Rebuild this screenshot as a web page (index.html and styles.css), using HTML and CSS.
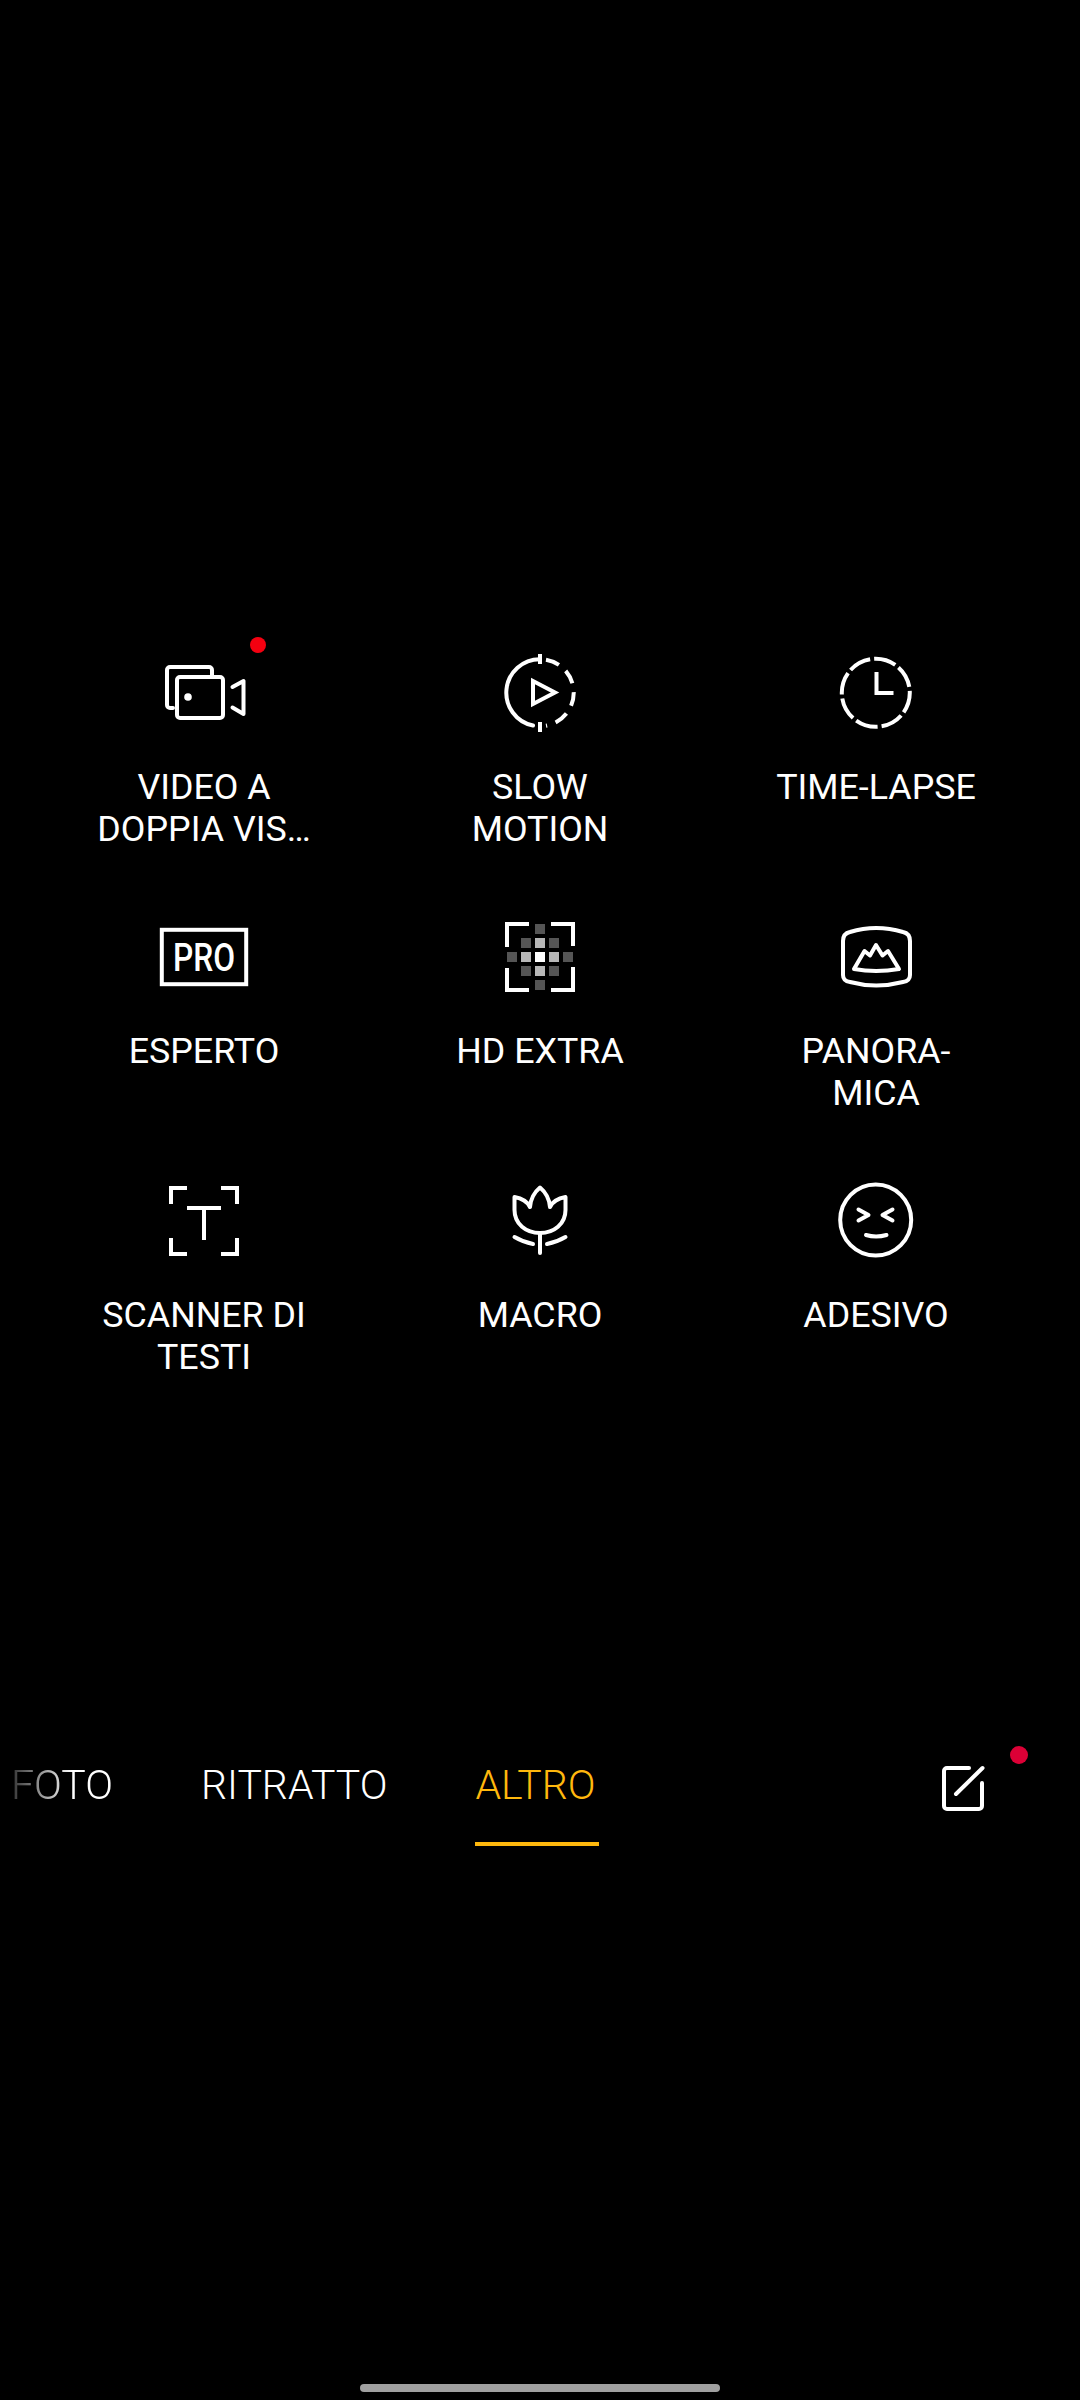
FILE: index.html
```html
<!DOCTYPE html>
<html lang="it">
<head>
<meta charset="utf-8">
<title>Fotocamera</title>
<link rel="stylesheet" href="styles.css">
</head>
<body>
<main class="screen">
  <div class="preview"></div>
  <section class="modes">
    <div class="mode">
      <span class="dot dot-bright"></span>
      <svg class="icon" viewBox="156 644 96 96"><path class="s" d="M173 708H170a3 3 0 0 1-3-3V670a3 3 0 0 1 3-3H209a3 3 0 0 1 3 3V675"/><rect class="s" x="177" y="677" width="46" height="41" rx="3"/><path class="s" d="M232.500 687L243.500 681V714L232.500 707.500"/><circle class="f" cx="188" cy="697" r="3.800"/></svg>
      <p class="label">VIDEO A<br>DOPPIA VIS…</p>
    </div>
    <div class="mode">
      <svg class="icon" viewBox="492 644 96 96"><path class="s" d="M540 659.200A33.500 33.500 0 0 0 533 725.500"/><path class="s sq" d="M540 654V664M540 722V732" stroke-width="5"/><path class="s dash-slow" d="M546 659.700A33.500 33.500 0 0 1 546 725.700"/><path class="s sq" d="M533 681V704L555 692.500Z"/></svg>
      <p class="label">SLOW<br>MOTION</p>
    </div>
    <div class="mode">
      <svg class="icon" viewBox="828 644 96 96"><circle class="s dash-time" cx="875.800" cy="692.800" r="34"/><path class="s sq" d="M876.500 672V693H893.500"/></svg>
      <p class="label">TIME-LAPSE</p>
    </div>
    <div class="mode">
      <svg class="icon" viewBox="156 908 96 96"><rect class="s sq" x="161.800" y="929.800" width="84.400" height="54.400"/><text class="pro" x="173" y="971" textLength="62" lengthAdjust="spacingAndGlyphs">PRO</text></svg>
      <p class="label">ESPERTO</p>
    </div>
    <div class="mode">
      <svg class="icon" viewBox="492 908 96 96">
        <path class="s sq" d="M507 947V924H529M551 924H573V946M573 967V990H551M529 990H507V968"/>
        <rect class="g1" x="535" y="924" width="10" height="10"/>
        <rect class="g1" x="521" y="938" width="10" height="10"/><rect class="g2" x="535" y="938" width="10" height="10"/><rect class="g1" x="549" y="938" width="10" height="10"/>
        <rect class="g1" x="507" y="952" width="10" height="10"/><rect class="g2" x="521" y="952" width="10" height="10"/><rect class="f" x="535" y="952" width="10" height="10"/><rect class="g2" x="549" y="952" width="10" height="10"/><rect class="g1" x="563" y="952" width="10" height="10"/>
        <rect class="g1" x="521" y="966" width="10" height="10"/><rect class="g2" x="535" y="966" width="10" height="10"/><rect class="g1" x="549" y="966" width="10" height="10"/>
        <rect class="g1" x="535" y="980" width="10" height="10"/>
      </svg>
      <p class="label">HD EXTRA</p>
    </div>
    <div class="mode">
      <svg class="icon" viewBox="828 908 96 96"><path class="s" d="M843 941Q843 933.500 850 932Q876 924 903 932Q910 933.500 910 941V975Q910 981 903 982Q876 989 850 982Q843 981 843 975Z"/><path class="s" d="M854 969L864.500 951L870 955.500L876 945L882.500 955.500L888 951L899 969Q876 973 854 969Z"/></svg>
      <p class="label">PANORA-<br>MICA</p>
    </div>
    <div class="mode">
      <svg class="icon" viewBox="156 1172 96 96"><path class="s sq" d="M171 1204V1188H187M221 1188H237V1204M237 1238V1254H221M187 1254H171V1238"/><path class="s sq" d="M187 1208H221M204 1208V1240"/></svg>
      <p class="label">SCANNER DI<br>TESTI</p>
    </div>
    <div class="mode">
      <svg class="icon" viewBox="492 1172 96 96"><path class="s" d="M514.500 1197Q526 1199 530 1207Q531 1195 540 1187.500Q549 1195 550 1207Q554 1199 565.500 1197V1210C565.500 1224 554 1233 540 1233C526 1233 514.500 1224 514.500 1210Z"/><path class="s" d="M540 1233V1253"/><path class="s" d="M514.500 1237Q523 1242 533 1244M565.500 1237Q557 1242 547 1244"/></svg>
      <p class="label">MACRO</p>
    </div>
    <div class="mode">
      <svg class="icon" viewBox="828 1172 96 96"><circle class="s" cx="875.700" cy="1220" r="35.500"/><path class="s" d="M858.500 1209.500L868.500 1215L858.500 1220.500M892.500 1209.500L882.500 1215L892.500 1220.500M866 1235Q876 1238 886.500 1235"/></svg>
      <p class="label">ADESIVO</p>
    </div>
  </section>
  <nav class="tabbar">
    <span class="tab tab-fade">FOTO</span>
    <span class="tab">RITRATTO</span>
    <span class="tab tab-active">ALTRO</span>
    <span class="edit">
      <svg class="edit-icon" viewBox="936 1760 56 56"><path class="s" d="M969 1767H947a3 3 0 0 0-3 3V1805a3 3 0 0 0 3 3H979a3 3 0 0 0 3-3V1782"/><path class="s" d="M956 1793L982.500 1767"/></svg>
      <span class="dot dot-crimson"></span>
    </span>
  </nav>
  <div class="home-bar"></div>
</main>
</body>
</html>
```

FILE: styles.css
```css
* { box-sizing: border-box; }
html, body { margin: 0; background: #000; }
.screen {
  width: 1080px;
  height: 2400px;
  background: #000;
  color: #fff;
  font-family: Roboto, "Liberation Sans", sans-serif;
  display: flex;
  flex-direction: column;
  overflow: hidden;
}
.preview { height: 644px; flex: none; }
.modes {
  display: grid;
  grid-template-columns: repeat(3, 336px);
  grid-auto-rows: 264px;
  padding-left: 36px;
  flex: none;
}
.mode {
  position: relative;
  display: flex;
  flex-direction: column;
  align-items: center;
}
.icon { width: 96px; height: 96px; display: block; flex: none; }
.label {
  margin: 26px 0 0;
  font-size: 35.800px;
  line-height: 42px;
  text-align: center;
  white-space: nowrap;
}
.s { fill: none; stroke: #fff; stroke-width: 4; stroke-linecap: round; stroke-linejoin: round; }
.sq { stroke-linecap: butt; stroke-linejoin: miter; }
.f { fill: #fff; }
.g1 { fill: #555; }
.g2 { fill: #b8b8b8; }
.dash-slow { stroke-linecap: butt; stroke-dasharray: 14 9; }
.dash-time { stroke-linecap: butt; stroke-dasharray: 22.700 4; stroke-dashoffset: 2; transform-box: fill-box; transform-origin: center; transform: rotate(-90deg); }
.pro { fill: #fff; font-family: Roboto, sans-serif; font-size: 38px; font-weight: 500; }
.dot { position: absolute; border-radius: 50%; }
.dot-bright { width: 16px; height: 16px; background: #f40010; left: 214px; top: -7px; }
.dot-crimson { width: 18px; height: 18px; background: #dc0036; left: 74px; top: -15px; }
.tabbar {
  margin-top: 325px;
  display: flex;
  align-items: flex-start;
  padding-left: 11px;
  gap: 88px;
  flex: none;
}
.tab {
  font-size: 41px;
  line-height: 48px;
  font-weight: 350;
  padding-bottom: 33px;
  border-bottom: 4px solid transparent;
  white-space: nowrap;
}
.tab-fade {
  -webkit-mask-image: linear-gradient(90deg, rgba(255,255,255,.2), #fff 60%);
  mask-image: linear-gradient(90deg, rgba(255,255,255,.2), #fff 60%);
}
.tab-active { color: #ffb80d; border-bottom-color: #ffb80d; min-width: 124px; }
.edit { position: relative; margin-left: auto; margin-right: 88px; width: 56px; height: 56px; flex: none; }
.edit-icon { width: 56px; height: 56px; display: block; }
.home-bar {
  width: 360px;
  height: 8px;
  border-radius: 4px;
  background: #a0a0a0;
  margin: auto auto 8px;
  flex: none;
}
```
